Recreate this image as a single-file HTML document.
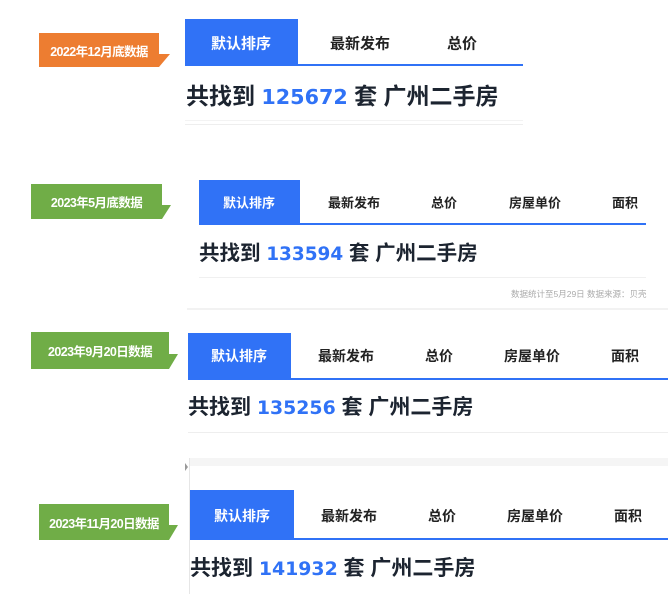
<!DOCTYPE html>
<html><head><meta charset="utf-8"><style>
*{margin:0;padding:0;box-sizing:border-box}
body{width:668px;height:594px;background:#fff;position:relative;overflow:hidden;font-family:"Liberation Sans","Noto Sans CJK SC",sans-serif;font-weight:bold}
.a{position:absolute}
.lab{position:absolute;color:#fff;font-size:12.5px;letter-spacing:-0.6px;display:flex;align-items:center;justify-content:center}
.tab{position:absolute;background:#3072f6}
.line{position:absolute;height:2px;background:#3072f6}
.t{position:absolute;transform:translate(-50%,-50%);white-space:nowrap;color:#222;font-size:14px}
.h{position:absolute;transform:translateY(-50%);white-space:nowrap;color:#1c2430}
.h b{color:#3072f6;font-family:"DejaVu Sans",sans-serif;font-size:0.9em}
.g{position:absolute;height:1px;background:#eee}
</style></head><body>

<!-- block1 -->
<div class="lab" style="left:39px;top:33px;width:120px;height:34px;background:#ed7d31">2022年12月底数据</div>
<svg class="a" style="left:159px;top:54px" width="12" height="14"><polygon points="0,0 11,0 0,13" fill="#ed7d31"/></svg>
<div class="tab" style="left:185px;top:19px;width:113px;height:46px"></div>
<div class="line" style="left:185px;top:64px;width:338px"></div>
<div class="t" style="left:241px;top:43px;color:#fff;font-size:15px">默认排序</div>
<div class="t" style="left:360px;top:43px;font-size:15px">最新发布</div>
<div class="t" style="left:462px;top:43px;font-size:15px">总价</div>
<div class="h" style="left:186px;top:94px;font-size:23px">共找到 <b>125672</b> 套 广州二手房</div>
<div class="g" style="left:185px;top:120px;width:338px;background:#f3f3f3"></div>
<div class="g" style="left:185px;top:124px;width:338px"></div>

<!-- block2 -->
<div class="lab" style="left:31px;top:184px;width:131px;height:35px;background:#70ad47">2023年5月底数据</div>
<svg class="a" style="left:162px;top:205px" width="10" height="15"><polygon points="0,0 9,0 0,14" fill="#70ad47"/></svg>
<div class="tab" style="left:199px;top:180px;width:101px;height:44px"></div>
<div class="line" style="left:199px;top:223px;width:447px"></div>
<div class="t" style="left:249px;top:202px;color:#fff;font-size:13px">默认排序</div>
<div class="t" style="left:354px;top:202px;font-size:13px">最新发布</div>
<div class="t" style="left:444px;top:202px;font-size:13px">总价</div>
<div class="t" style="left:535px;top:202px;font-size:13px">房屋单价</div>
<div class="t" style="left:625px;top:202px;font-size:13px">面积</div>
<div class="h" style="left:199px;top:251px;font-size:20.5px">共找到 <b>133594</b> 套 广州二手房</div>
<div class="g" style="left:199px;top:277px;width:447px;background:#f0f0f0"></div>
<div class="a" style="left:511px;top:288px;font-size:8.5px;font-weight:normal;color:#aaa;white-space:nowrap">数据统计至5月29日 数据来源：贝壳</div>
<div class="g" style="left:187px;top:308px;width:481px;height:2px;background:#f2f2f2"></div>

<!-- block3 -->
<div class="lab" style="left:31px;top:332px;width:138px;height:37px;background:#70ad47">2023年9月20日数据</div>
<svg class="a" style="left:169px;top:354px" width="10" height="16"><polygon points="0,0 9,0 0,15" fill="#70ad47"/></svg>
<div class="tab" style="left:188px;top:333px;width:103px;height:46px"></div>
<div class="line" style="left:188px;top:378px;width:480px"></div>
<div class="t" style="left:239px;top:356px;color:#fff">默认排序</div>
<div class="t" style="left:346px;top:356px">最新发布</div>
<div class="t" style="left:439px;top:356px">总价</div>
<div class="t" style="left:532px;top:356px">房屋单价</div>
<div class="t" style="left:625px;top:356px">面积</div>
<div class="h" style="left:188px;top:406px;font-size:21px">共找到 <b>135256</b> 套 广州二手房</div>
<div class="g" style="left:188px;top:432px;width:480px"></div>
<div class="g" style="left:190px;top:458px;width:478px;height:8px;background:#f5f5f5"></div>
<svg class="a" style="left:185px;top:463px" width="4" height="8"><polygon points="0,0 3,4 0,8" fill="#999"/></svg>
<div class="a" style="left:189px;top:458px;width:1px;height:136px;background:#e6e6e6"></div>

<!-- block4 -->
<div class="lab" style="left:39px;top:504px;width:130px;height:36px;background:#70ad47">2023年11月20日数据</div>
<svg class="a" style="left:169px;top:525px" width="10" height="16"><polygon points="0,0 9,0 0,15" fill="#70ad47"/></svg>
<div class="tab" style="left:190px;top:490px;width:104px;height:49px"></div>
<div class="line" style="left:190px;top:538px;width:478px"></div>
<div class="t" style="left:242px;top:516px;color:#fff">默认排序</div>
<div class="t" style="left:349px;top:516px">最新发布</div>
<div class="t" style="left:442px;top:516px">总价</div>
<div class="t" style="left:535px;top:516px">房屋单价</div>
<div class="t" style="left:628px;top:516px">面积</div>
<div class="h" style="left:190px;top:567px;font-size:21px">共找到 <b>141932</b> 套 广州二手房</div>
</body></html>
